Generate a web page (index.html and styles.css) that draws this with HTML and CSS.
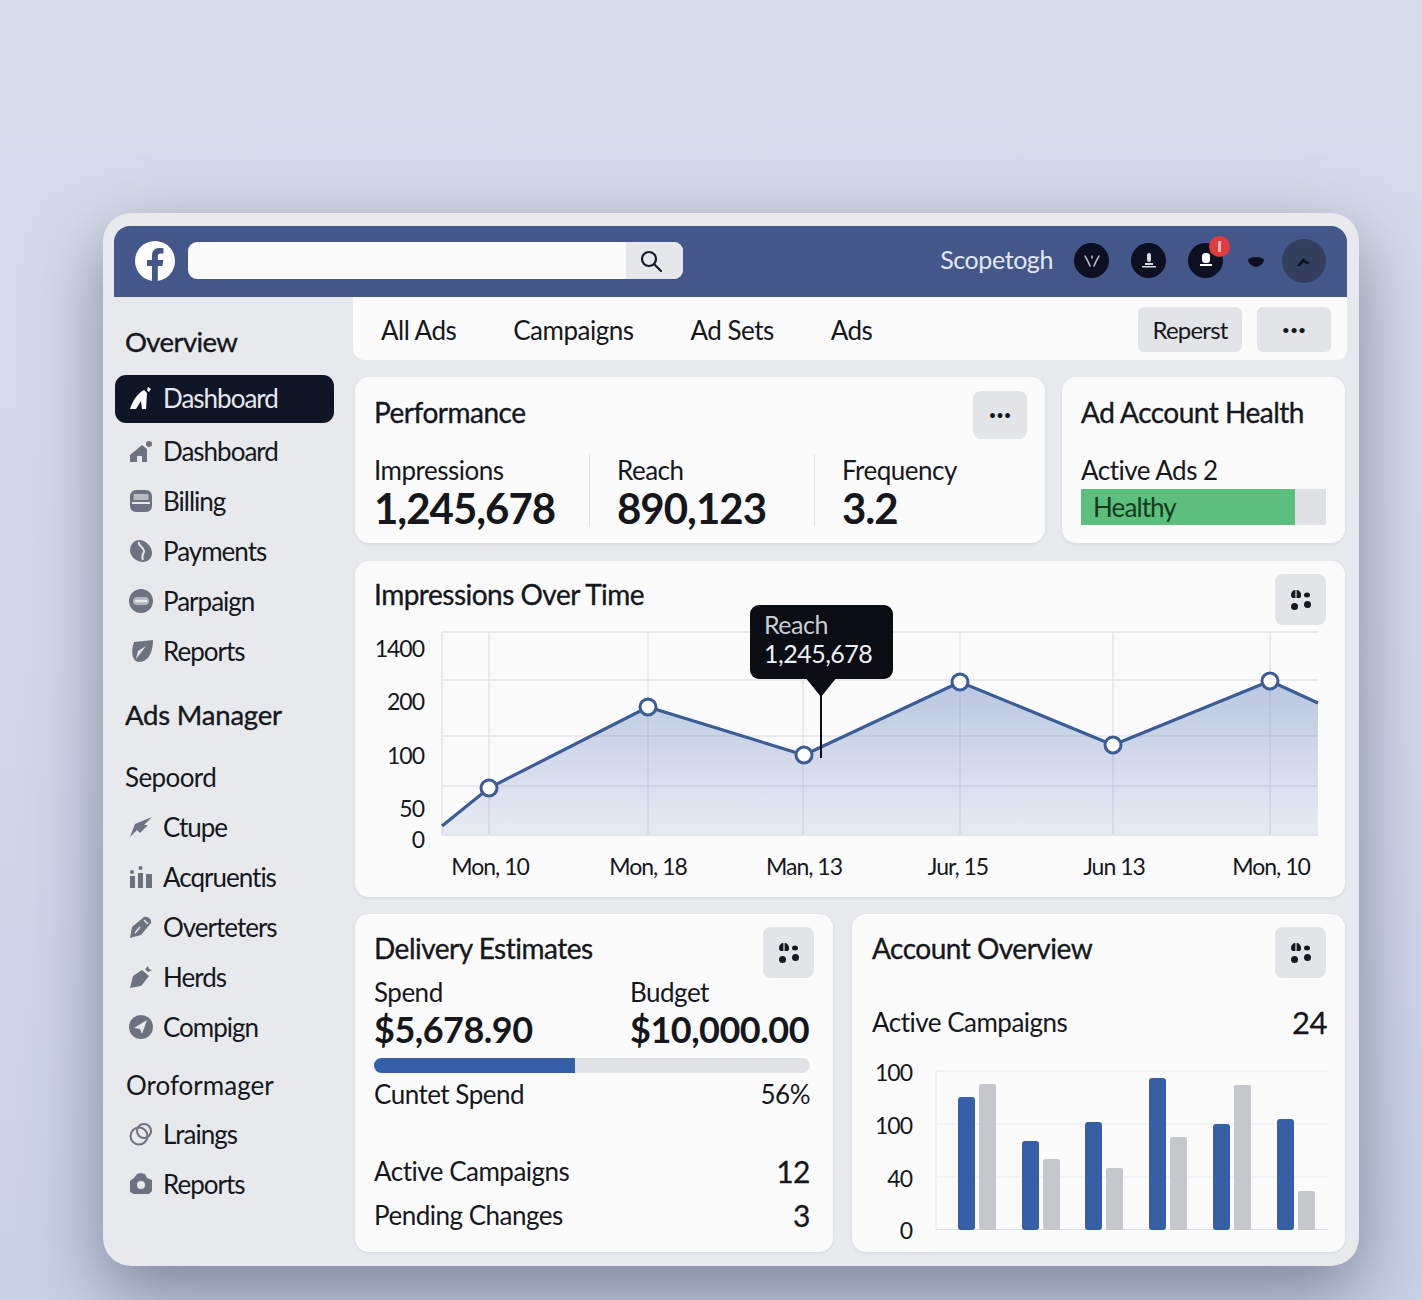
FILE: index.html
```html
<!DOCTYPE html>
<html lang="en">
  <head>
    <meta charset="UTF-8" />
    <title>Ads Dashboard</title>
    <link rel="stylesheet" href="styles.css">
  </head>
  <body>
    <div class="window">
      <header class="topbar">
        <svg class="fb-logo" viewBox="0 0 40 40"><circle cx="20" cy="20" r="20" fill="#fff"/><path d="M17 40V25h-5v-6h5v-4.500C17 9.500 20 7 24.500 7c2 0 3.500.2 4 .3v5.200h-2.800c-2.300 0-2.900 1.100-2.900 2.800V19h5.500l-.8 6h-4.700v15z" fill="#44578a"/></svg>
        <div class="search">
          <div class="search-btn">
            <svg width="24" height="24" viewBox="0 0 24 24" fill="none" stroke="#15192a" stroke-width="2.200"><circle cx="10" cy="10" r="7"/><path d="M15 15l7 7" stroke-linecap="round"/></svg>
          </div>
        </div>
        <span class="brand">Scopetogh</span>
        <div class="top-icon"><svg width="22" height="18" viewBox="0 0 22 18" fill="none" stroke="#b9bcc8" stroke-width="1.600" stroke-linecap="round"><path d="M4 4c1 2 3 5 5 10M18 4c-1 2-3 5-5 10M11 4v2"/></svg></div>
        <div class="top-icon"><svg width="22" height="22" viewBox="0 0 22 22" fill="#d8dae2"><rect x="9" y="3" width="4" height="9" rx="2"/><path d="M7 13h8v2H7zM4 16h14v1.500H4z"/></svg></div>
        <div class="top-icon">
          <svg width="22" height="22" viewBox="0 0 22 22" fill="#fff"><rect x="7" y="3" width="8" height="10" rx="3.500"/><path d="M5 14h12v2H5z"/></svg>
          <span class="badge"></span>
        </div>
        <svg class="top-small" width="18" height="14" viewBox="0 0 18 14"><path d="M1 6c2-4 14-4 16 0 0 3-5 7-8 7S1 9 1 6z" fill="#0c1020"/></svg>
        <div class="avatar"><svg width="18" height="12" viewBox="0 0 18 12"><path d="M2 11l6-8 3 3 5 2-5 1-2-2-4 4z" fill="#0c1020"/></svg></div>
      </header>

      <div class="layout">
        <nav class="sidebar">
          <h2 class="side-head first">Overview</h2>
          <a class="side-item active">
            <svg class="side-icon" viewBox="0 0 24 24"><path d="M1 23C4 14 9 7 15 4l3 3-1 16h-4l-1-8-5 8zM19 1l3 2-2 3-2-2z" fill="#fff"/></svg>
            Dashboard
          </a>
          <a class="side-item">
            <svg class="side-icon" viewBox="0 0 24 24"><path d="M1 23v-7L13 6l5 4v13h-5v-6H8v6zM20 2a3 3 0 1 1 0 6 3 3 0 0 1 0-6z"/></svg>
            Dashboard
          </a>
          <a class="side-item">
            <svg class="side-icon" viewBox="0 0 24 24"><rect x="1" y="1" width="22" height="22" rx="6"/><rect x="4.500" y="5" width="15" height="6" rx="1" fill="#b9bcc5"/><rect x="3" y="13" width="18" height="2" fill="#e7e9ed"/></svg>
            Billing
          </a>
          <a class="side-item">
            <svg class="side-icon" viewBox="0 0 24 24"><path d="M10 1c6 0 13 6 13 13 0 5-4 9-9 9C7 23 1 17 1 11 1 6 5 1 10 1z"/><path d="M10 3c-2 3 6 6 5 10-.5 2-3 3-1 8" fill="none" stroke="#e7e9ed" stroke-width="2"/></svg>
            Payments
          </a>
          <a class="side-item">
            <svg class="side-icon" viewBox="0 0 24 24"><circle cx="12" cy="12" r="12"/><rect x="4" y="8" width="16" height="8" rx="4" fill="#b3b6c0"/><path d="M7 12h4M13 12h4" stroke="#e7e9ed" stroke-width="2.500" stroke-linecap="round"/></svg>
            Parpaign
          </a>
          <a class="side-item">
            <svg class="side-icon" viewBox="0 0 24 24"><path d="M5 3l19-2c0 11-4 22-14 22C4 23 1 14 5 3z"/><path d="M7 20l10-13-8 5z" fill="#e7e9ed"/></svg>
            Reports
          </a>
          <h2 class="side-head manager">Ads Manager</h2>
          <div class="side-sub sepoord">Sepoord</div>
          <a class="side-item">
            <svg class="side-icon" viewBox="0 0 24 24"><path d="M1 22L6 9 23 2 15 10l4 0-8 8-3-3z"/></svg>
            Ctupe
          </a>
          <a class="side-item">
            <svg class="side-icon" viewBox="0 0 24 24"><rect x="1" y="11" width="5" height="12"/><rect x="9" y="8" width="5" height="15"/><rect x="17" y="9" width="6" height="14"/><circle cx="3" cy="7" r="2"/><circle cx="11.500" cy="3" r="2"/></svg>
            Acqruentis
          </a>
          <a class="side-item">
            <svg class="side-icon" viewBox="0 0 24 24"><path d="M1 23l2-11L15 2c4-1 8 3 7 6L12 20z"/><path d="M15 5l4 4M6 18l5-6" stroke="#e7e9ed" stroke-width="1.500" fill="none"/></svg>
            Overteters
          </a>
          <a class="side-item">
            <svg class="side-icon" viewBox="0 0 24 24"><path d="M1 23l3-12 9-6 7 6-8 10zM16 4l3-3 1 3 3 1-4 2z"/></svg>
            Herds
          </a>
          <a class="side-item">
            <svg class="side-icon" viewBox="0 0 24 24"><circle cx="12" cy="12" r="12"/><path d="M5 13l13-8-5 14-2-5z" fill="#e7e9ed"/></svg>
            Compign
          </a>
          <div class="side-sub oroform">Oroformager</div>
          <a class="side-item">
            <svg class="side-icon ring-icon" viewBox="0 0 24 24"><circle cx="10" cy="14" r="8.500"/><circle cx="15" cy="9" r="7"/></svg>
            Lraings
          </a>
          <a class="side-item">
            <svg class="side-icon" viewBox="0 0 24 24"><path d="M8 2l4-1 4 1 2 4 5 2v11l-3 3H5l-4-2V9l4-3z"/><circle cx="12" cy="13" r="4" fill="#e7e9ed"/></svg>
            Reports
          </a>
        </nav>

        <main class="main">
          <div class="tabs">
            <a class="tab">All Ads</a>
            <a class="tab">Campaigns</a>
            <a class="tab">Ad Sets</a>
            <a class="tab">Ads</a>
            <button class="btn report-btn">Reperst</button>
            <button class="btn more-btn">•••</button>
          </div>

          <div class="row row-top">
            <section class="card perf-card">
              <div class="card-head">
                <h3>Performance</h3>
                <button class="mini-btn dots">•••</button>
              </div>
              <div class="stats">
                <div class="stat stat-a"><div class="label">Impressions</div><div class="value">1,245,678</div></div>
                <div class="stat stat-b"><div class="label">Reach</div><div class="value">890,123</div></div>
                <div class="stat stat-c"><div class="label">Frequency</div><div class="value">3.2</div></div>
              </div>
            </section>
            <section class="card health-card">
              <h3>Ad Account Health</h3>
              <div class="label health-label">Active Ads 2</div>
              <div class="health-bar"><div class="health-fill" style="width: 87.500%">Healthy</div></div>
            </section>
          </div>

          <section class="card chart-card">
            <div class="card-head">
              <h3>Impressions Over Time</h3>
              <button class="mini-btn"><svg width="22" height="22"><use href="#grip"/></svg></button>
            </div>
            <svg class="line-chart" width="990" height="262" viewBox="355 625 990 262">
              <defs>
                <linearGradient id="area" x1="0" y1="0" x2="0" y2="1">
                  <stop offset="0" stop-color="#a9b9da" stop-opacity=".8"/>
                  <stop offset="1" stop-color="#dfe4f0" stop-opacity=".7"/>
                </linearGradient>
              </defs>
              <path d="M442 826L489 788 648 707 804 755 960 682 1113 745 1270 681 1318 703V835H442Z" fill="url(#area)"/>
              <path class="grid-line" d="M442 632H1318M442 680H1318M442 736H1318M442 786H1318M442 632V835M489 632V835M648 632V835M803 632V835M960 632V835M1113 632V835M1270 632V835"/>
              <path d="M442 835H1318" stroke="#dfe1e7" stroke-width="1.500"/>
              <path d="M442 826L489 788 648 707 804 755 960 682 1113 745 1270 681 1318 703" fill="none" stroke="#3a5c98" stroke-width="3.200"/>
              <path d="M821 690V758" stroke="#0a0d14" stroke-width="2"/>
              <g class="dots-group">
                <circle cx="489" cy="788" r="8"/><circle cx="648" cy="707" r="8"/><circle cx="804" cy="755" r="8"/>
                <circle cx="960" cy="682" r="8"/><circle cx="1113" cy="745" r="8"/><circle cx="1270" cy="681" r="8"/>
              </g>
              <g class="axis-y">
                <text x="424" y="657">1400</text><text x="424" y="710">200</text><text x="424" y="764">100</text>
                <text x="424" y="817">50</text><text x="424" y="848">0</text>
              </g>
              <g class="axis-x">
                <text x="490" y="875">Mon, 10</text><text x="648" y="875">Mon, 18</text><text x="804" y="875">Man, 13</text>
                <text x="958" y="875">Jur, 15</text><text x="1114" y="875">Jun 13</text><text x="1271" y="875">Mon, 10</text>
              </g>
            </svg>
            <div class="tooltip">
              <div class="tip-label">Reach</div>
              <div>1,245,678</div>
            </div>
          </section>

          <div class="row row-bottom">
            <section class="card delivery-card">
              <div class="card-head">
                <h3>Delivery Estimates</h3>
                <button class="mini-btn"><svg width="22" height="22"><use href="#grip"/></svg></button>
              </div>
              <div class="money">
                <div class="money-col"><div class="label">Spend</div><div class="amount">$5,678.90</div></div>
                <div class="money-col"><div class="label">Budget</div><div class="amount">$10,000.00</div></div>
              </div>
              <div class="progress"><div class="progress-fill" style="width: 46%"></div></div>
              <div class="line"><span>Cuntet Spend</span><span>56%</span></div>
              <div class="line line-a"><span>Active Campaigns</span><span class="num">12</span></div>
              <div class="line line-b"><span>Pending Changes</span><span class="num">3</span></div>
            </section>
            <section class="card account-card">
              <div class="card-head">
                <h3>Account Overview</h3>
                <button class="mini-btn"><svg width="22" height="22"><use href="#grip"/></svg></button>
              </div>
              <div class="line account-line"><span>Active Campaigns</span><span class="num big">24</span></div>
              <svg class="bar-chart" width="493" height="190" viewBox="852 1055 493 190">
                <path class="grid-line light" d="M936 1071H1328M936 1124H1328M936 1177H1328M936 1071V1229"/>
                <path d="M936 1229.500H1328" stroke="#dfe1e7"/>
                <g fill="#3560a8">
                  <rect x="958" y="1097" width="17" height="133" rx="3"/><rect x="1022" y="1141" width="17" height="89" rx="3"/>
                  <rect x="1085" y="1122" width="17" height="108" rx="3"/><rect x="1149" y="1078" width="17" height="152" rx="3"/>
                  <rect x="1213" y="1124" width="17" height="106" rx="3"/><rect x="1277" y="1119" width="17" height="111" rx="3"/>
                </g>
                <g fill="#c5c7cd">
                  <rect x="979" y="1084" width="17" height="146" rx="2"/><rect x="1043" y="1159" width="17" height="71" rx="2"/>
                  <rect x="1106" y="1168" width="17" height="62" rx="2"/><rect x="1170" y="1137" width="17" height="93" rx="2"/>
                  <rect x="1234" y="1085" width="17" height="145" rx="2"/><rect x="1298" y="1191" width="17" height="39" rx="2"/>
                </g>
                <g class="axis-y">
                  <text x="912" y="1081">100</text><text x="912" y="1134">100</text><text x="912" y="1187">40</text><text x="912" y="1239">0</text>
                </g>
              </svg>
            </section>
          </div>
        </main>
      </div>
    </div>

    <svg width="0" height="0" class="sprite">
      <symbol id="grip" viewBox="0 0 22 22">
        <path d="M1 6c0-3 2-5 5-5s5 2 5 5-1 3-2 3H3C2 9 1 8 1 6z" fill="#17191f"/>
        <path d="M6 1v8" stroke="#e3e4e8" stroke-width="1.200"/>
        <ellipse cx="17" cy="6" rx="3" ry="2.500" fill="#17191f"/>
        <ellipse cx="4.500" cy="17.500" rx="3.500" ry="3.500" fill="#17191f"/>
        <ellipse cx="17.500" cy="15.500" rx="3.500" ry="3.500" fill="#17191f"/>
      </symbol>
    </svg>
  </body>
</html>
```

FILE: styles.css
```css
* {
  box-sizing: border-box;
}
html,
body {
  height: 1300px;
}
body {
  margin: 0;
  padding: 213px 63px 0 103px;
  overflow: hidden;
  font-family: Lato, "Liberation Sans", sans-serif;
  color: #15171d;
  background: linear-gradient(180deg, #d6dcea 0%, #d2d9e8 50%, #c9d1e4 100%);
}
.sprite {
  position: absolute;
}
h2,
h3 {
  margin: 0;
  font-weight: 400;
  -webkit-text-stroke: 0.35px currentColor;
}
button {
  font-family: inherit;
  border: none;
  color: inherit;
}

.window {
  height: 1053px;
  padding: 13px 12px 14px 11px;
  display: flex;
  flex-direction: column;
  background-color: #e7e9ed;
  border-radius: 28px;
  box-shadow: 0 26px 70px rgba(70, 80, 105, 0.6);
}

/* top bar */
.topbar {
  height: 71px;
  flex: none;
  display: flex;
  align-items: center;
  padding: 0 21px 2px;
  background-color: #44578a;
  border-radius: 16px 16px 0 0;
}
.fb-logo {
  width: 40px;
  height: 40px;
  flex: none;
}
.search {
  width: 495px;
  height: 37px;
  margin-left: 13px;
  display: flex;
  justify-content: flex-end;
  background-color: #fbfbfb;
  border-radius: 9px;
  overflow: hidden;
}
.search-btn {
  width: 57px;
  padding-right: 8px;
  display: flex;
  align-items: center;
  justify-content: center;
  background-color: #e6e7ea;
}
.brand {
  margin-left: auto;
  margin-right: 21px;
  padding-bottom: 3px;
  font-size: 25px;
  letter-spacing: -0.4px;
  color: #e4e8f2;
}
.top-icon {
  position: relative;
  width: 35px;
  height: 35px;
  margin-right: 22px;
  display: flex;
  align-items: center;
  justify-content: center;
  background-color: #0c1020;
  border-radius: 50%;
}
.badge {
  position: absolute;
  top: -7px;
  right: -7px;
  width: 21px;
  height: 21px;
  background-color: #e23b3f;
  border-radius: 50%;
}
.badge::after {
  content: "";
  position: absolute;
  left: 9px;
  top: 5px;
  width: 3px;
  height: 11px;
  background-color: #f6b7b7;
}
.top-small {
  margin: 0 17px 0 2px;
}
.avatar {
  width: 44px;
  height: 44px;
  display: flex;
  align-items: center;
  justify-content: center;
  background-color: #353f5e;
  border-radius: 50%;
}

/* sidebar */
.layout {
  flex: 1;
  display: flex;
  min-height: 0;
}
.sidebar {
  width: 239px;
  flex: none;
  display: flex;
  flex-direction: column;
}
.side-head {
  font-size: 27.500px;
  letter-spacing: -0.6px;
  padding-left: 11px;
  line-height: 36px;
}
.side-head.first {
  margin-top: 27px;
  margin-bottom: 15px;
}
.side-head.manager {
  margin-top: 20px;
  letter-spacing: -0.2px;
}
.side-item {
  height: 50px;
  display: flex;
  align-items: center;
  gap: 10px;
  padding-left: 15px;
  padding-bottom: 3px;
  font-size: 26px;
  letter-spacing: -1px;
}
.side-item.active {
  width: 219px;
  height: 48px;
  margin: 0 0 4px 1px;
  padding-left: 14px;
  color: #e7e9f0;
  background-color: #0f1626;
  border-radius: 11px;
}
.side-icon {
  width: 24px;
  height: 24px;
  flex: none;
  fill: #6c7280;
}
.ring-icon {
  fill: none;
  stroke: #6c7280;
  stroke-width: 2;
}
.side-sub {
  padding-left: 11px;
  font-size: 26px;
  letter-spacing: -0.6px;
  line-height: 34px;
}
.sepoord {
  margin-top: 27px;
  margin-bottom: 9px;
}
.oroform {
  margin-top: 15px;
  margin-bottom: 8px;
  padding-left: 12px;
  letter-spacing: 0;
}

/* main column */
.main {
  flex: 1;
  min-width: 0;
  display: flex;
  flex-direction: column;
  gap: 17px;
}
.tabs {
  height: 63px;
  flex: none;
  display: flex;
  align-items: center;
  padding: 2px 16px 0 28px;
  background-color: #fbfbfb;
  border-radius: 0 0 10px 12px;
}
.tab {
  margin-right: 57px;
  font-size: 26px;
  letter-spacing: -0.5px;
}
.btn {
  height: 45px;
  font-size: 24px;
  letter-spacing: -0.8px;
  background-color: #e3e4e8;
  border-radius: 6px;
}
.report-btn {
  width: 104px;
  margin-left: auto;
}
.more-btn {
  width: 74px;
  margin-left: 15px;
  font-size: 14px;
  letter-spacing: 0;
}
.row {
  display: flex;
  gap: 17px;
  padding: 0 2px;
}
.card {
  position: relative;
  background-color: #fbfbfb;
  border-radius: 14px;
  box-shadow: 0 1px 3px rgba(90, 100, 130, 0.15);
}
.card h3 {
  font-size: 28px;
  letter-spacing: -0.5px;
}
.card-head {
  display: flex;
  align-items: flex-start;
  justify-content: space-between;
}
.mini-btn {
  width: 51px;
  height: 51px;
  display: flex;
  align-items: center;
  justify-content: center;
  padding: 0;
  background-color: #e3e4e8;
  border-radius: 8px;
}
.dots {
  width: 54px;
  height: 48px;
  font-size: 13px;
}
.label {
  font-size: 26px;
  line-height: 32px;
  letter-spacing: -0.5px;
}

/* performance */
.row-top {
  height: 166px;
  margin-bottom: 1px;
}
.perf-card {
  width: 690px;
  padding: 17px 18px 0 19px;
}
.perf-card .card-head {
  height: 60px;
}
.perf-card .dots {
  margin-top: -3px;
}
.perf-card h3 {
  line-height: 36px;
}
.stats {
  display: flex;
}
.stat {
  height: 72px;
}
.stat-a {
  width: 216px;
  border-right: 1px solid #e2e3e7;
}
.stat-b {
  width: 225px;
  padding-left: 27px;
  border-right: 1px solid #e2e3e7;
}
.stat-c {
  padding-left: 27px;
}
.value {
  font-size: 42px;
  font-weight: 700;
  line-height: 45px;
  letter-spacing: -1px;
}
.health-card {
  flex: 1;
  padding: 17px 19px 0;
}
.health-card h3 {
  line-height: 36px;
}
.health-label {
  margin-top: 24px;
}
.health-bar {
  height: 36px;
  margin-top: 3px;
  background-color: #e0e1e5;
}
.health-fill {
  height: 100%;
  padding-left: 12px;
  font-size: 26px;
  letter-spacing: -0.9px;
  line-height: 36px;
  color: #15391f;
  background-color: #5cc07c;
}

/* chart card */
.chart-card {
  height: 336px;
  margin: 0 2px;
  padding: 13px 19px 0 19px;
}
.chart-card h3 {
  margin-top: 2px;
  line-height: 36px;
}
.chart-card .card-head {
  height: 51px;
}
.line-chart {
  display: block;
  margin: 0 0 0 -19px;
}
.grid-line {
  fill: none;
  stroke: rgba(120, 130, 160, 0.18);
  stroke-width: 1.500;
}
.grid-line.light {
  stroke: #f0f1f3;
}
.dots-group circle {
  fill: #fff;
  stroke: #3a5c98;
  stroke-width: 3;
}
.axis-y text,
.axis-x text {
  font-size: 23px;
  letter-spacing: -1px;
  fill: #15171d;
}
.axis-y text {
  text-anchor: end;
}
.axis-x text {
  text-anchor: middle;
}
.tooltip {
  position: absolute;
  left: 395px;
  top: 44px;
  width: 143px;
  height: 74px;
  padding: 5px 14px;
  font-size: 25px;
  line-height: 29px;
  letter-spacing: -0.5px;
  color: #f0f1f4;
  background-color: #0a0d14;
  border-radius: 9px;
}
.tip-label {
  color: #c9ccd3;
}
.tooltip::after {
  content: "";
  position: absolute;
  left: 55px;
  top: 72px;
  border: 16px solid transparent;
  border-top: 20px solid #0a0d14;
  border-bottom: none;
}

/* bottom cards */
.row-bottom {
  flex: 1;
  gap: 19px;
}
.delivery-card {
  width: 478px;
  flex: none;
  padding: 13px 23px 0 19px;
}
.delivery-card .mini-btn {
  margin-right: -4px;
}
.account-card {
  width: 493px;
  flex: none;
  padding: 13px 18px 0 20px;
}
.account-card .mini-btn {
  margin-right: 1px;
}
.row-bottom h3 {
  margin-top: 3px;
  line-height: 36px;
}
.row-bottom .card-head {
  height: 51px;
}
.money {
  display: flex;
  margin-top: -2px;
}
.money-col:first-child {
  width: 256px;
  flex: none;
}
.amount {
  font-size: 36px;
  font-weight: 700;
  line-height: 42px;
  letter-spacing: -0.5px;
}
.progress {
  height: 15px;
  margin-top: 8px;
  background-color: #e1e2e6;
  border-radius: 8px;
  overflow: hidden;
}
.progress-fill {
  height: 100%;
  background-color: #3560a8;
}
.line {
  display: flex;
  justify-content: space-between;
  font-size: 26px;
  letter-spacing: -0.5px;
  line-height: 32px;
}
.progress + .line {
  margin-top: 5px;
}
.line-a {
  margin-top: 45px;
}
.line-b {
  margin-top: 12px;
}
.num {
  font-size: 30px;
  -webkit-text-stroke: 0.3px currentColor;
}
.num.big {
  font-size: 31px;
}
.account-line {
  margin-top: 28px;
  align-items: center;
}
.bar-chart {
  display: block;
  margin: 17px 0 0 -20px;
}
```
